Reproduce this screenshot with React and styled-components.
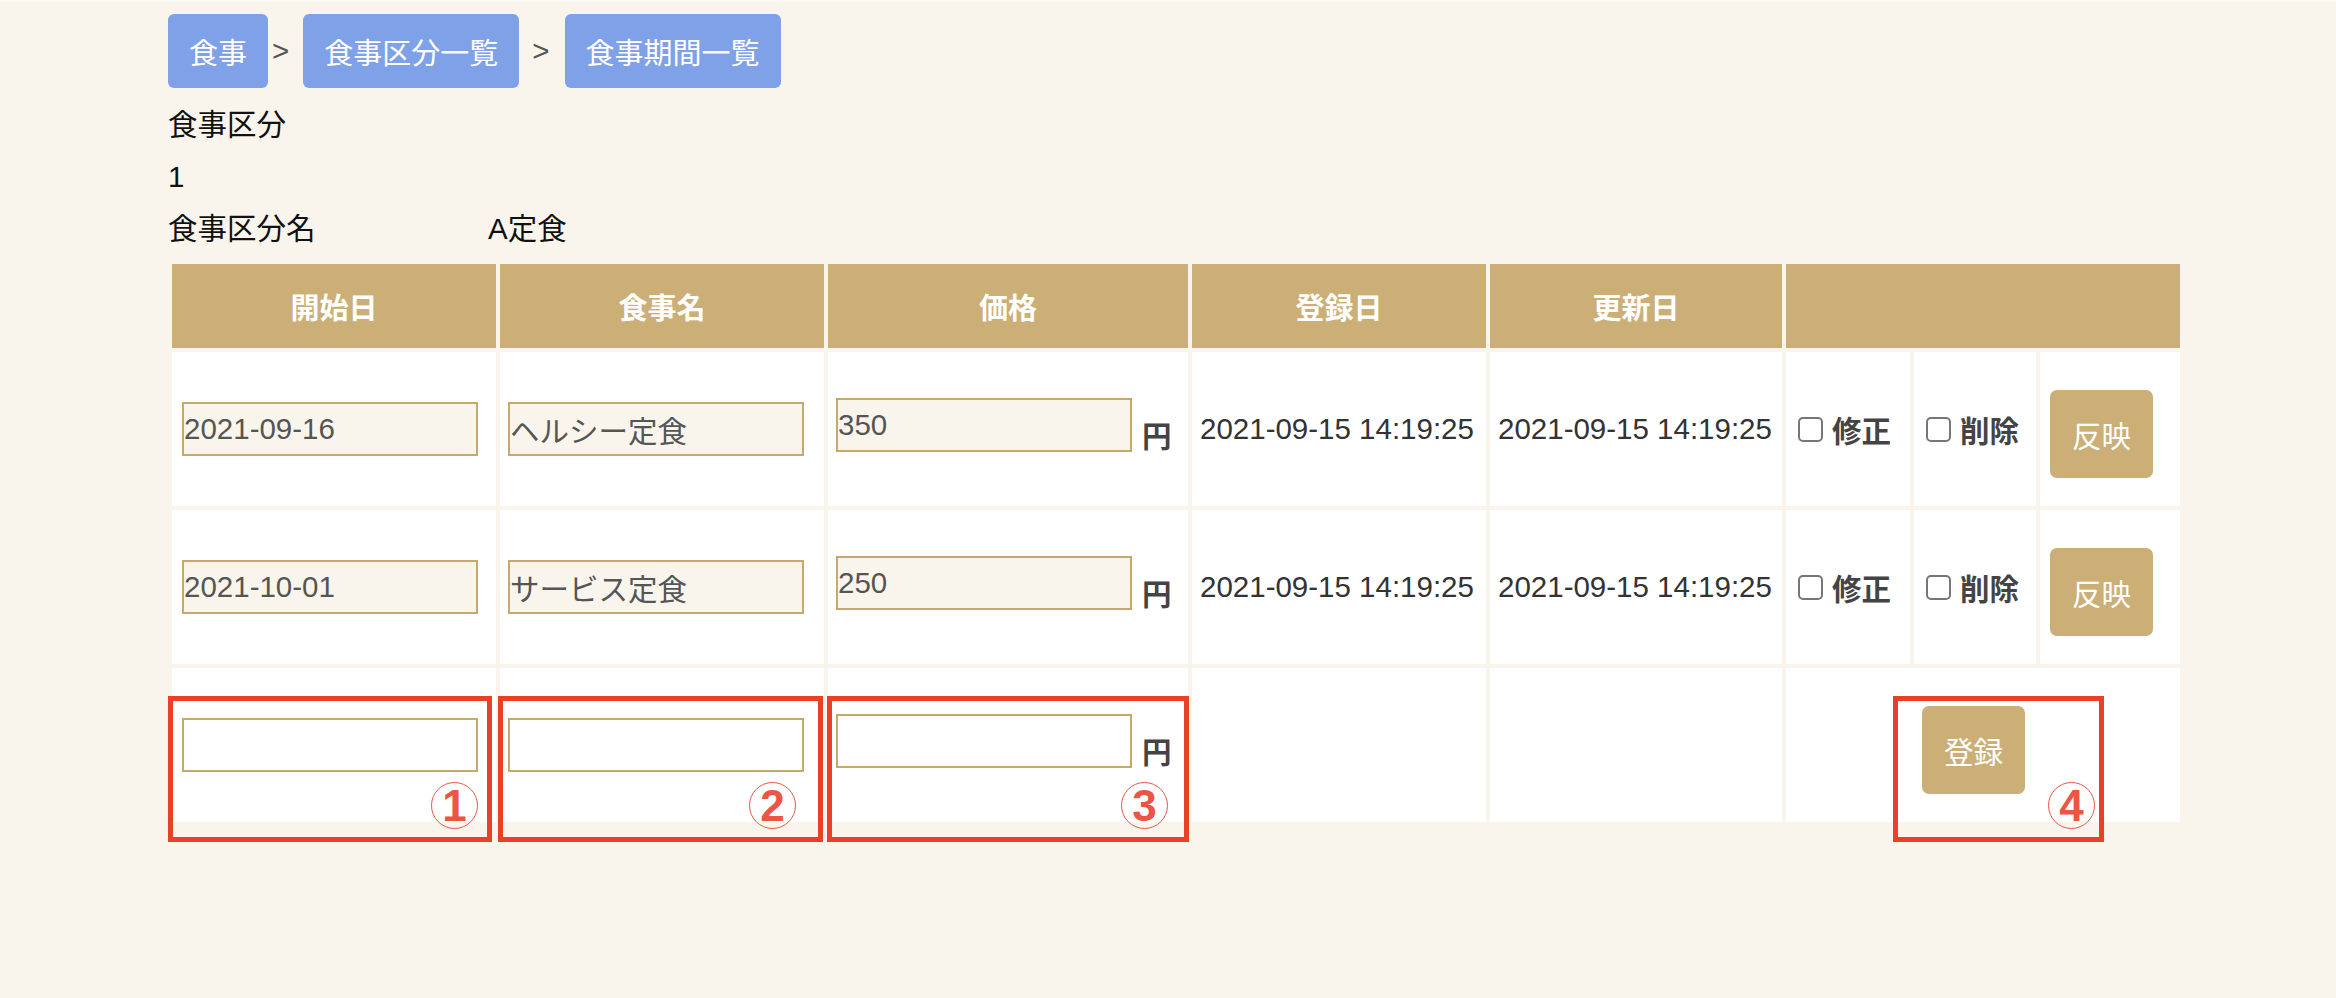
import React from 'react';
import styled, { createGlobalStyle } from 'styled-components';

const GlobalStyle = createGlobalStyle`
  html, body { margin: 0; padding: 0; background: #f9f5ec; }
  body {
    font-family: "Liberation Sans", "Noto Sans CJK JP", sans-serif;
    font-size: 29.5px;
    color: #000;
  }
  * { box-sizing: border-box; }
`;

const TopStrip = styled.div`
  height: 2px;
  background: #fcfaf6;
`;

const Page = styled.div`
  padding: 12px 0 0 168px;
  min-height: 996px;
`;

const Breadcrumb = styled.nav`
  display: flex;
  align-items: center;
  height: 74px;
`;

const Crumb = styled.a`
  display: flex;
  align-items: center;
  height: 74px;
  padding: 0 21px;
  background: #7fa1e8;
  color: #fff;
  border-radius: 6px;
  text-decoration: none;
  font-size: 29px;
`;

const Sep = styled.span`
  color: #555;
  margin-left: ${p => p.$left}px;
  margin-right: ${p => p.$right}px;
`;

const Info = styled.div`
  margin-top: 11px;
`;

const InfoLine = styled.div`
  display: flex;
  height: 52px;
  line-height: 52px;
  color: #111;
`;

const InfoLabel = styled.span`
  width: 320px;
`;

const TableWrap = styled.div`
  position: relative;
  margin-top: 5px;
  width: 2016px;
`;

const Table = styled.table`
  border-collapse: separate;
  border-spacing: 4px;
  table-layout: fixed;
  width: 2016px;
`;

const Col = styled.col`
  width: ${p => p.$w}px;
`;

const Th = styled.th`
  height: 84px;
  background: #cbaf77;
  color: #fff;
  font-weight: 700;
  font-size: 29px;
  padding: 0;
  text-align: center;
  vertical-align: middle;
`;

const Td = styled.td`
  height: 154px;
  background: #fff;
  padding: 0 8px 0 ${p => (p.$first ? 10 : 8)}px;
  vertical-align: middle;
  color: #333;
  white-space: nowrap;
  text-align: left;
`;

const TextInput = styled.input`
  display: block;
  width: 296px;
  height: 54px;
  margin: 0;
  padding: 0;
  border: 2px solid #c8a96c;
  border-radius: 0;
  outline: none;
  background: ${p => (p.$filled ? '#f9f5ec' : '#fff')};
  font: inherit;
  color: #555;
`;

const PriceWrap = styled.div`
  display: flex;
  align-items: flex-end;
  padding-bottom: 8px;
`;

const Yen = styled.span`
  margin: 0 0 1px 10px;
  line-height: 1;
  font-weight: 700;
  color: #444;
`;

const CheckLabel = styled.label`
  display: flex;
  align-items: center;
  gap: 9px;
  padding-left: 4px;
  font-weight: 700;
  color: #444;
`;

const Check = styled.input.attrs({ type: 'checkbox' })`
  appearance: none;
  width: 25px;
  height: 25px;
  margin: 0;
  border: 2px solid #767676;
  border-radius: 5px;
  background: #fff;
`;

const ActionButton = styled.button`
  display: block;
  height: 88px;
  margin: 10px 0 0 ${p => p.$offset}px;
  padding: 0 22px;
  border: none;
  border-radius: 7px;
  background: #cbaf77;
  color: #fff;
  font: inherit;
`;

const Callout = styled.div`
  position: absolute;
  left: ${p => p.$x}px;
  top: 436px;
  width: ${p => p.$w}px;
  height: 146px;
  border: 5px solid #e84128;
  pointer-events: none;
`;

const Badge = styled.span`
  position: absolute;
  right: ${p => p.$r}px;
  bottom: 8px;
  width: 47px;
  height: 47px;
  border: 1.5px solid #ec5546;
  border-radius: 50%;
  display: flex;
  align-items: center;
  justify-content: center;
  color: #ec5546;
  font: 700 44px/1 "Liberation Sans", sans-serif;
`;

const cols = [324, 324, 360, 294, 292, 124, 122, 140];

const rows = [
  { start: '2021-09-16', name: 'ヘルシー定食', price: '350', created: '2021-09-15 14:19:25', updated: '2021-09-15 14:19:25' },
  { start: '2021-10-01', name: 'サービス定食', price: '250', created: '2021-09-15 14:19:25', updated: '2021-09-15 14:19:25' },
];

const callouts = [
  { x: 0, w: 324, n: '1', r: 9 },
  { x: 330, w: 325, n: '2', r: 22 },
  { x: 659, w: 362, n: '3', r: 16 },
  { x: 1725, w: 211, n: '4', r: 4 },
];

export default function App() {
  return (
    <>
      <GlobalStyle />
      <TopStrip />
      <Page>
        <Breadcrumb>
          <Crumb href="#">食事</Crumb>
          <Sep $left={4} $right={14}>&gt;</Sep>
          <Crumb href="#">食事区分一覧</Crumb>
          <Sep $left={13} $right={15}>&gt;</Sep>
          <Crumb href="#">食事期間一覧</Crumb>
        </Breadcrumb>

        <Info>
          <InfoLine>食事区分</InfoLine>
          <InfoLine>1</InfoLine>
          <InfoLine>
            <InfoLabel>食事区分名</InfoLabel>
            <span>A定食</span>
          </InfoLine>
        </Info>

        <TableWrap>
          <Table>
            <colgroup>
              {cols.map((w, i) => (
                <Col key={i} $w={w} />
              ))}
            </colgroup>
            <thead>
              <tr>
                <Th>開始日</Th>
                <Th>食事名</Th>
                <Th>価格</Th>
                <Th>登録日</Th>
                <Th>更新日</Th>
                <Th colSpan={3} />
              </tr>
            </thead>
            <tbody>
              {rows.map((r, i) => (
                <tr key={i}>
                  <Td $first>
                    <TextInput $filled defaultValue={r.start} />
                  </Td>
                  <Td>
                    <TextInput $filled defaultValue={r.name} />
                  </Td>
                  <Td>
                    <PriceWrap>
                      <TextInput $filled defaultValue={r.price} />
                      <Yen>円</Yen>
                    </PriceWrap>
                  </Td>
                  <Td>{r.created}</Td>
                  <Td>{r.updated}</Td>
                  <Td>
                    <CheckLabel>
                      <Check />
                      修正
                    </CheckLabel>
                  </Td>
                  <Td>
                    <CheckLabel>
                      <Check />
                      削除
                    </CheckLabel>
                  </Td>
                  <Td>
                    <ActionButton $offset={2}>反映</ActionButton>
                  </Td>
                </tr>
              ))}
              <tr>
                <Td $first>
                  <TextInput />
                </Td>
                <Td>
                  <TextInput />
                </Td>
                <Td>
                  <PriceWrap>
                    <TextInput />
                    <Yen>円</Yen>
                  </PriceWrap>
                </Td>
                <Td />
                <Td />
                <Td colSpan={3}>
                  <ActionButton $offset={128}>登録</ActionButton>
                </Td>
              </tr>
            </tbody>
          </Table>

          {callouts.map(c => (
            <Callout key={c.n} $x={c.x} $w={c.w}>
              <Badge $r={c.r}>{c.n}</Badge>
            </Callout>
          ))}
        </TableWrap>
      </Page>
    </>
  );
}
